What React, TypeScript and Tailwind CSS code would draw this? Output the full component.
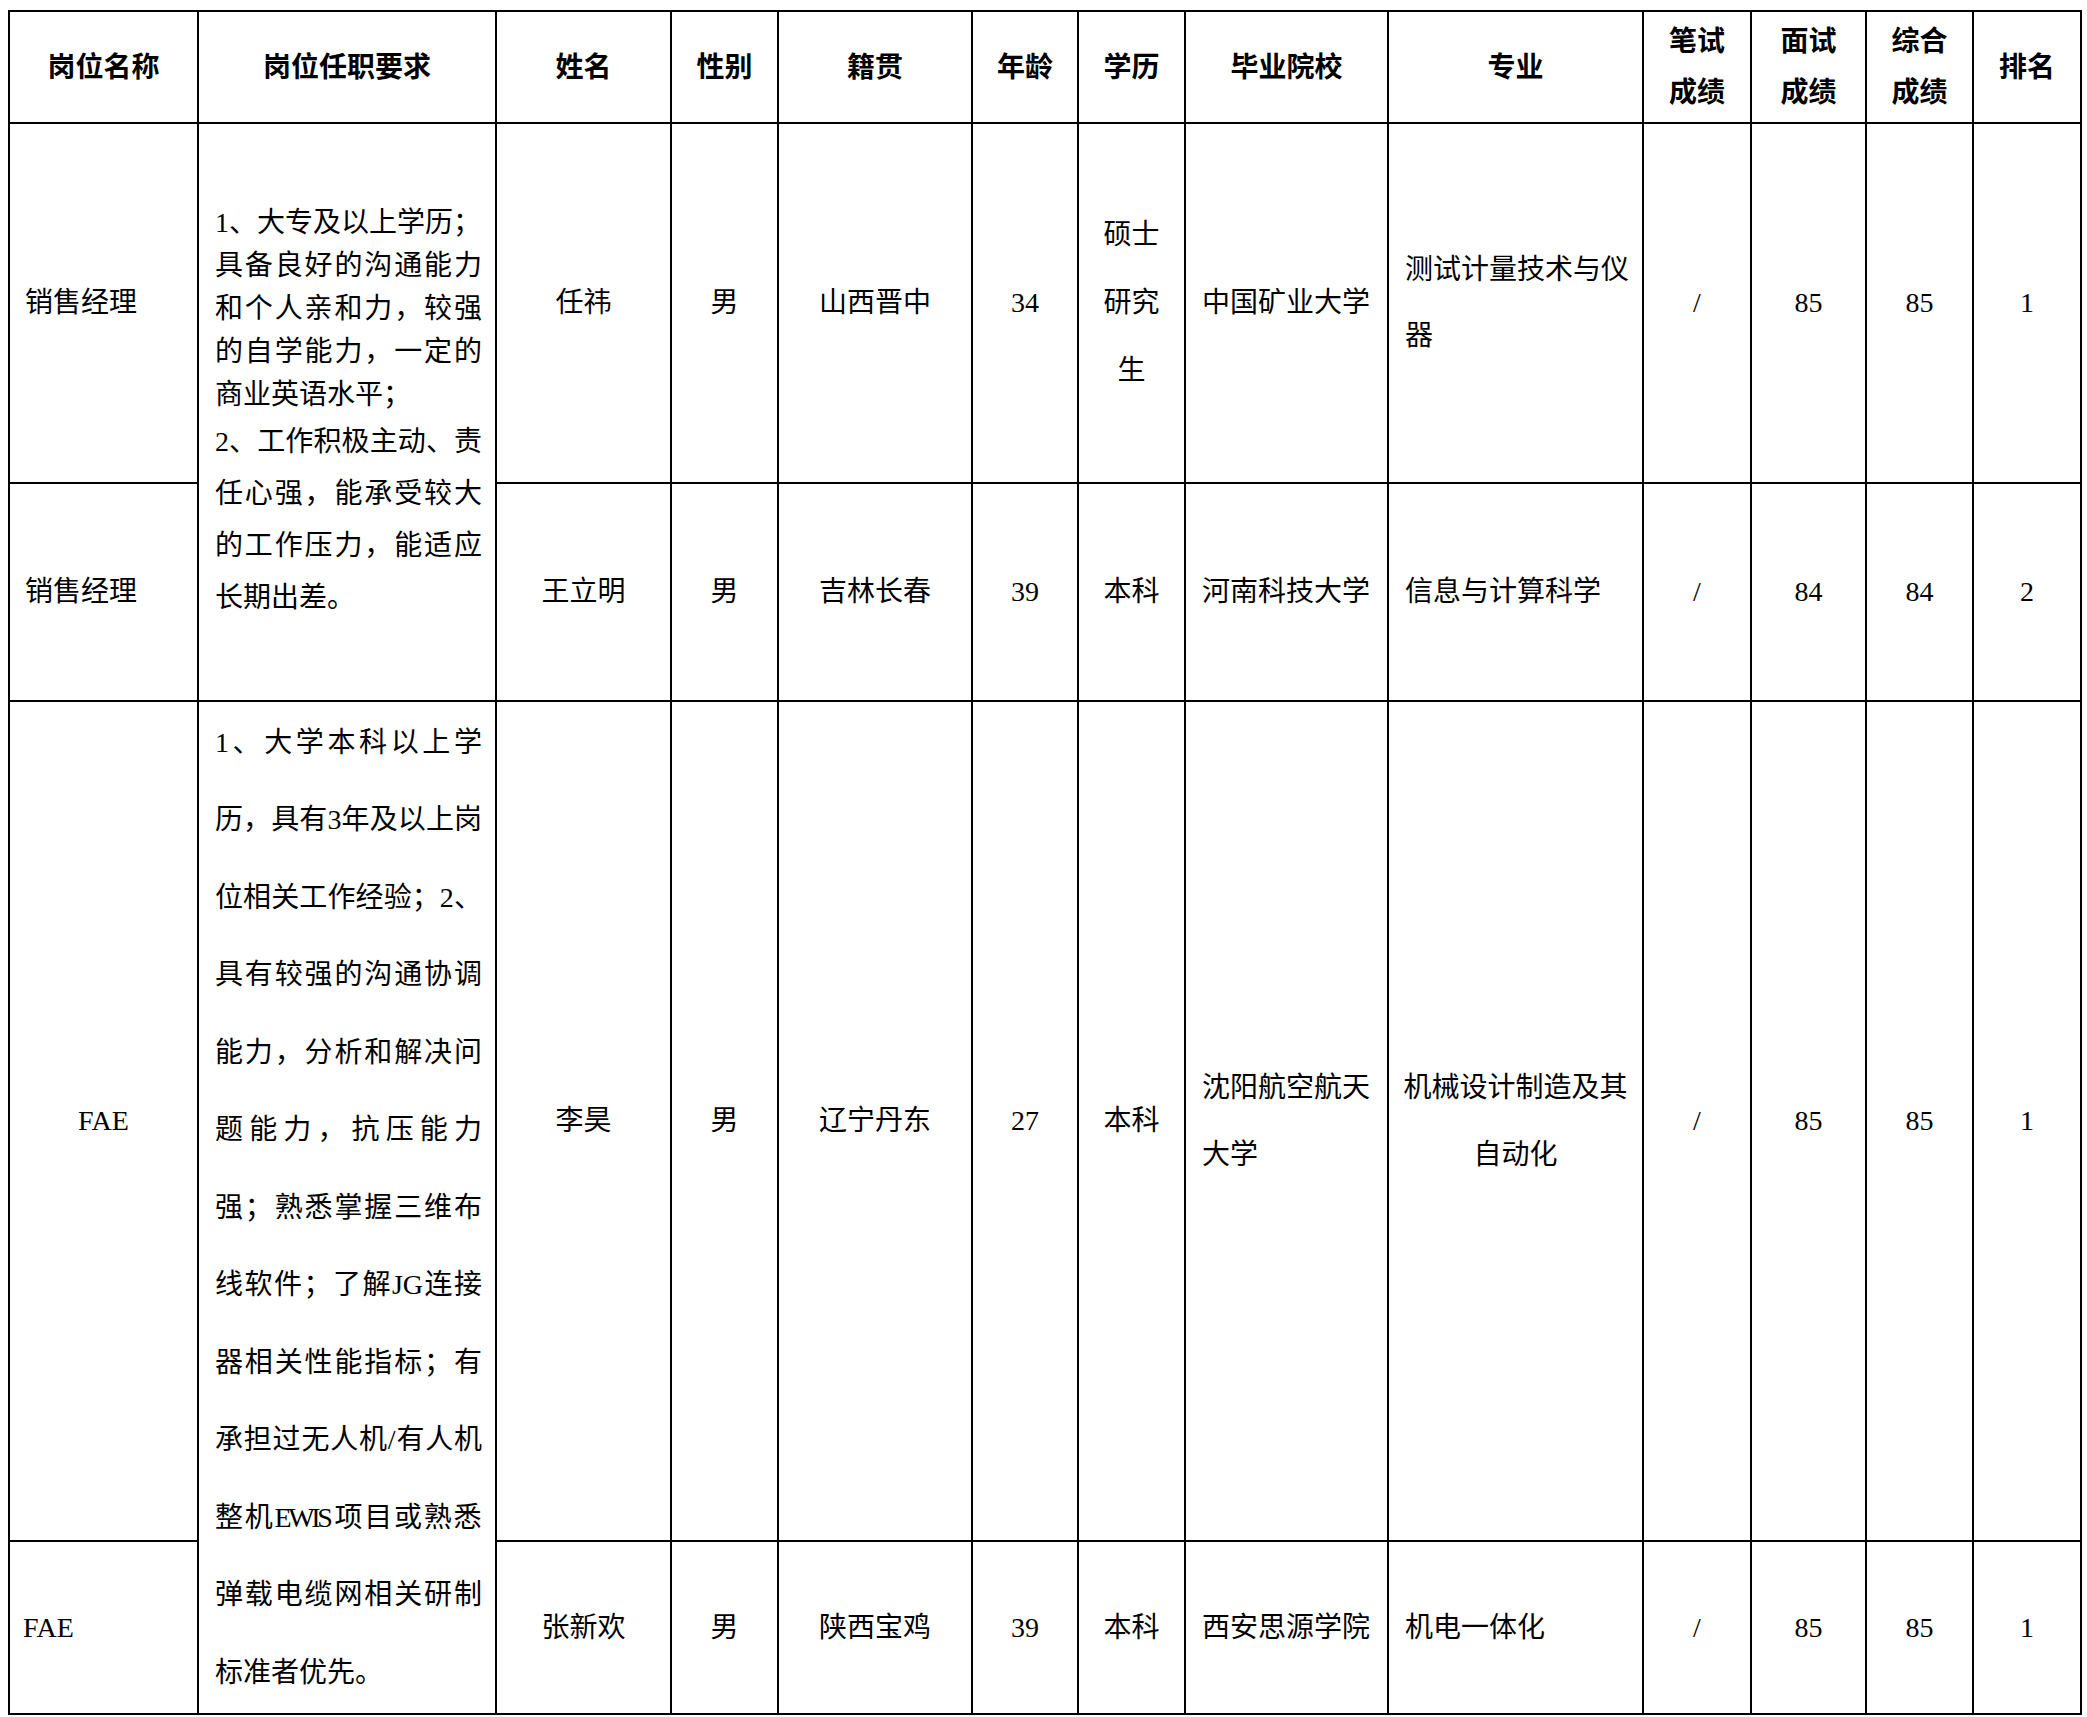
import React from "react";

const colWidths = [189, 298, 175, 107, 194, 106, 107, 203, 255, 108, 115, 107, 108];

type ReqLine = { text: string; justify: boolean; tight?: boolean };

// 销售经理: two paragraphs with different line spacing
const salesReq: { text: string; justify: boolean; h: "a" | "b" }[] = [
  { text: "1、大专及以上学历；", justify: false, h: "a" },
  { text: "具备良好的沟通能力", justify: true, h: "a" },
  { text: "和个人亲和力，较强", justify: true, h: "a" },
  { text: "的自学能力，一定的", justify: true, h: "a" },
  { text: "商业英语水平；", justify: false, h: "a" },
  { text: "2、工作积极主动、责", justify: true, h: "b" },
  { text: "任心强，能承受较大", justify: true, h: "b" },
  { text: "的工作压力，能适应", justify: true, h: "b" },
  { text: "长期出差。", justify: false, h: "b" },
];

const faeReq: ReqLine[] = [
  { text: "1、大学本科以上学", justify: true },
  { text: "历，具有3年及以上岗", justify: true },
  { text: "位相关工作经验；2、", justify: true },
  { text: "具有较强的沟通协调", justify: true },
  { text: "能力，分析和解决问", justify: true },
  { text: "题能力，抗压能力", justify: true },
  { text: "强；熟悉掌握三维布", justify: true },
  { text: "线软件；了解JG连接", justify: true },
  { text: "器相关性能指标；有", justify: true },
  { text: "承担过无人机/有人机", justify: true },
  { text: "整机EWIS项目或熟悉", justify: true, tight: true },
  { text: "弹载电缆网相关研制", justify: true },
  { text: "标准者优先。", justify: false },
];

const cell = "border-2 border-black p-0 align-middle";
const center = `${cell} text-center`;
const left = `${cell} text-left pl-[16px]`;

function SalesRequirement() {
  return (
    <div className="flex flex-col">
      {salesReq.map((l) => (
        <div
          key={l.text}
          className={`whitespace-nowrap ${l.h === "a" ? "h-[43px] leading-[43px]" : "h-[52px] leading-[52px]"} ${
            l.justify ? "text-justify [text-align-last:justify]" : "text-left"
          }`}
        >
          {l.text}
        </div>
      ))}
    </div>
  );
}

function FaeRequirement() {
  return (
    <div className="flex flex-col">
      {faeReq.map((l) => (
        <div
          key={l.text}
          className={`whitespace-nowrap h-[77.5px] leading-[77.5px] ${
            l.justify ? "text-justify [text-align-last:justify]" : "text-left"
          } ${l.tight ? "tracking-[-3.4px] pr-[4px]" : ""}`}
        >
          {l.text}
        </div>
      ))}
    </div>
  );
}

const headers: React.ReactNode[] = [
  "岗位名称",
  "岗位任职要求",
  "姓名",
  "性别",
  "籍贯",
  "年龄",
  "学历",
  "毕业院校",
  "专业",
  <>笔试<br />成绩</>,
  <>面试<br />成绩</>,
  <>综合<br />成绩</>,
  "排名",
];

export default function App() {
  return (
    <div
      lang="zh-CN"
      className="min-h-screen bg-white pt-[10px] pl-[8px] text-black text-[28px] font-[family-name:'Liberation_Serif','Noto_Sans_CJK_SC',serif]"
    >
      <table className="border-collapse table-fixed w-[2074px]">
        <colgroup>
          {colWidths.map((w, i) => (
            <col key={i} style={{ width: w }} />
          ))}
        </colgroup>
        <thead>
          <tr>
            {headers.map((h, i) => (
              <th key={i} className={`${center} h-[112px] font-bold leading-[51px]`}>
                {h}
              </th>
            ))}
          </tr>
        </thead>
        <tbody>
          <tr>
            <td className={`${cell} h-[360px] text-left pl-[15px]`}>销售经理</td>
            <td rowSpan={2} className={`${cell} pl-[16px] pr-[13px]`}>
              <SalesRequirement />
            </td>
            <td className={center}>任祎</td>
            <td className={center}>男</td>
            <td className={center}>山西晋中</td>
            <td className={center}>34</td>
            <td className={`${center} leading-[68px]`}>
              硕士<br />研究<br />生
            </td>
            <td className={left}>中国矿业大学</td>
            <td className={`${left} leading-[66px]`}>
              测试计量技术与仪<br />器
            </td>
            <td className={center}>/</td>
            <td className={center}>85</td>
            <td className={center}>85</td>
            <td className={center}>1</td>
          </tr>
          <tr>
            <td className={`${cell} h-[218px] text-left pl-[15px]`}>销售经理</td>
            <td className={center}>王立明</td>
            <td className={center}>男</td>
            <td className={center}>吉林长春</td>
            <td className={center}>39</td>
            <td className={center}>本科</td>
            <td className={left}>河南科技大学</td>
            <td className={left}>信息与计算科学</td>
            <td className={center}>/</td>
            <td className={center}>84</td>
            <td className={center}>84</td>
            <td className={center}>2</td>
          </tr>
          <tr>
            <td className={`${center} h-[840px]`}>FAE</td>
            <td rowSpan={2} className={`${cell} pl-[16px] pr-[13px]`}>
              <FaeRequirement />
            </td>
            <td className={center}>李昊</td>
            <td className={center}>男</td>
            <td className={center}>辽宁丹东</td>
            <td className={center}>27</td>
            <td className={center}>本科</td>
            <td className={`${left} leading-[67px]`}>
              沈阳航空航天<br />大学
            </td>
            <td className={`${center} leading-[67px]`}>
              机械设计制造及其<br />自动化
            </td>
            <td className={center}>/</td>
            <td className={center}>85</td>
            <td className={center}>85</td>
            <td className={center}>1</td>
          </tr>
          <tr>
            <td className={`${cell} h-[173px] text-left pl-[13px]`}>FAE</td>
            <td className={center}>张新欢</td>
            <td className={center}>男</td>
            <td className={center}>陕西宝鸡</td>
            <td className={center}>39</td>
            <td className={center}>本科</td>
            <td className={left}>西安思源学院</td>
            <td className={left}>机电一体化</td>
            <td className={center}>/</td>
            <td className={center}>85</td>
            <td className={center}>85</td>
            <td className={center}>1</td>
          </tr>
        </tbody>
      </table>
    </div>
  );
}
